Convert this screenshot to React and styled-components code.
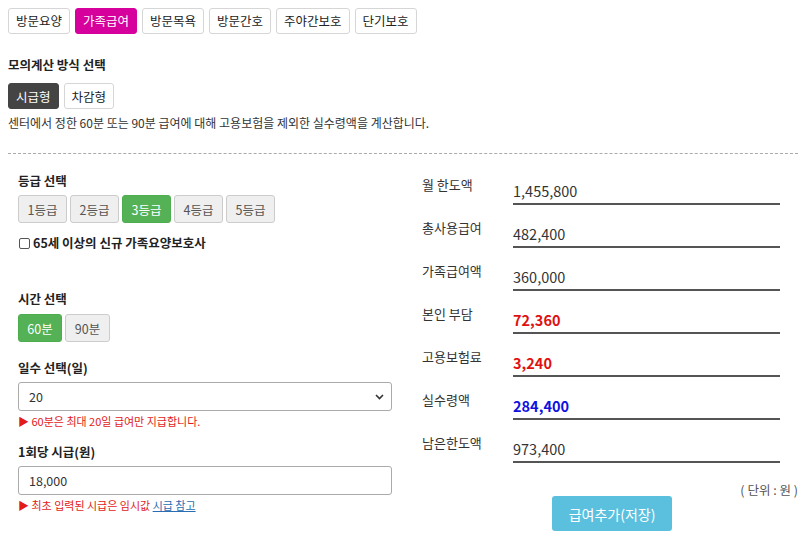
import * as React from 'react';
import styled, { createGlobalStyle } from 'styled-components';

const GlobalStyle = createGlobalStyle`
  body {
    margin: 0;
    background: #fff;
    font-family: "Noto Sans CJK KR", "Noto Sans", sans-serif;
    color: #222;
  }
`;

const Page = styled.div`
  width: 800px;
  height: 539px;
  padding: 8px 0 0 8px;
  box-sizing: border-box;
  overflow: hidden;
`;

const TabRow = styled.div`
  display: flex;
  gap: 5px;
`;

const Tab = styled.button`
  height: 26px;
  padding: 0 7px;
  border: 1px solid ${(p) => (p.$active ? '#d6009c' : '#d6d6d6')};
  border-radius: 3px;
  background: ${(p) => (p.$active ? '#d6009c' : '#fff')};
  color: ${(p) => (p.$active ? '#fff' : '#222')};
  font-family: inherit;
  font-size: 12.5px;
  line-height: 1;
`;

const Title = styled.div`
  font-size: 12.5px;
  font-weight: 700;
  line-height: 18px;
  margin: ${(p) => p.$margin || '0'};
`;

const MethodRow = styled.div`
  display: flex;
  gap: 5px;
  margin-top: 9px;
`;

const MethodBtn = styled.button`
  height: 26px;
  padding: 0 7px;
  border: 1px solid ${(p) => (p.$active ? '#444' : '#d6d6d6')};
  border-radius: 3px;
  background: ${(p) => (p.$active ? '#444' : '#fff')};
  color: ${(p) => (p.$active ? '#fff' : '#222')};
  font-family: inherit;
  font-size: 12.5px;
`;

const Desc = styled.div`
  font-size: 12px;
  line-height: 18px;
  color: #333;
  margin-top: 5px;
`;

const Divider = styled.hr`
  margin: 21px 2px 0 0;
  border: none;
  border-top: 1px dashed #aaa;
`;

const Columns = styled.div`
  display: flex;
  padding-left: 10px;
`;

const Left = styled.div`
  width: 374px;
  padding-top: 18px;
`;

const Right = styled.div`
  width: 368px;
  margin-left: 30px;
  padding-top: 8px;
`;

const BtnGroup = styled.div`
  display: flex;
  gap: 3px;
  margin-top: ${(p) => p.$gap}px;
`;

const GrayBtn = styled.button`
  height: 28px;
  width: ${(p) => p.$w}px;
  padding: 0;
  border: 1px solid ${(p) => (p.$active ? '#4cae4c' : '#ccc')};
  border-radius: 3px;
  background: ${(p) => (p.$active ? '#55b155' : '#efefef')};
  color: ${(p) => (p.$active ? '#fff' : '#555')};
  font-family: inherit;
  font-size: 12.5px;
`;

const Check = styled.label`
  display: flex;
  align-items: center;
  gap: 3px;
  margin-top: 11px;
  font-size: 12.5px;
  font-weight: 700;
  line-height: 18px;
`;

const Box = styled.span`
  width: 9px;
  height: 9px;
  margin-left: 1px;
  border: 1px solid #555;
  border-radius: 2px;
`;

const Field = styled.div`
  margin-top: 5px;
  height: 27px;
  border: 1px solid #aaa;
  border-radius: 3px;
  display: flex;
  align-items: center;
  justify-content: space-between;
  padding: 0 7px 0 10px;
  font-size: 12.5px;
  color: #333;
`;

const Note = styled.div`
  margin-top: 3px;
  font-size: 11px;
  line-height: 15px;
  color: #e21a1a;
`;

const Link = styled.a`
  color: #2a6db0;
  text-decoration: underline;
`;

const ResultRow = styled.div`
  display: flex;
  height: 43px;
  align-items: stretch;
`;

const RLabel = styled.div`
  width: 91px;
  font-size: 13px;
  color: #333;
  line-height: 18px;
  margin-top: 14px;
`;

const RValue = styled.div`
  flex: none;
  width: 267px;
  border-bottom: 2px solid #555;
  display: flex;
  align-items: flex-end;
  padding-bottom: 2px;
  box-sizing: border-box;
  font-size: 14.5px;
  line-height: 20px;
  font-weight: ${(p) => (p.$color ? 700 : 400)};
  color: ${(p) => p.$color || '#333'};
`;

const Unit = styled.div`
  text-align: right;
  font-size: 12.5px;
  color: #555;
  margin-top: 21px;
  margin-right: -8px;
  line-height: 12px;
  white-space: pre;
`;

const SaveBtn = styled.button`
  display: block;
  margin: 0 0 0 130px;
  width: 120px;
  height: 35px;
  border: none;
  border-radius: 3px;
  background: #5bc0de;
  color: #fff;
  font-family: inherit;
  font-size: 14px;
`;

const Chevron = () => (
  <svg width="9" height="6" viewBox="0 0 9 6">
    <path d="M1 1l3.5 3.5L8 1" fill="none" stroke="#333" strokeWidth="1.6" />
  </svg>
);

const tabs = ['방문요양', '가족급여', '방문목욕', '방문간호', '주야간보호', '단기보호'];
const grades = ['1등급', '2등급', '3등급', '4등급', '5등급'];
const results = [
  ['월 한도액', '1,455,800'],
  ['총사용급여', '482,400'],
  ['가족급여액', '360,000'],
  ['본인 부담', '72,360', '#e01010'],
  ['고용보험료', '3,240', '#e01010'],
  ['실수령액', '284,400', '#1010e0'],
  ['남은한도액', '973,400'],
];

export default function App() {
  return (
    <>
      <GlobalStyle />
      <Page>
        <TabRow>
          {tabs.map((t) => (
            <Tab key={t} $active={t === '가족급여'}>{t}</Tab>
          ))}
        </TabRow>
        <Title $margin="22px 0 0">모의계산 방식 선택</Title>
        <MethodRow>
          <MethodBtn $active>시급형</MethodBtn>
          <MethodBtn>차감형</MethodBtn>
        </MethodRow>
        <Desc>센터에서 정한 60분 또는 90분 급여에 대해 고용보험을 제외한 실수령액을 계산합니다.</Desc>
        <Divider />
        <Columns>
          <Left>
            <Title>등급 선택</Title>
            <BtnGroup $gap={5}>
              {grades.map((g) => (
                <GrayBtn key={g} $w={49} $active={g === '3등급'}>{g}</GrayBtn>
              ))}
            </BtnGroup>
            <Check><Box />65세 이상의 신규 가족요양보호사</Check>
            <Title $margin="38px 0 0">시간 선택</Title>
            <BtnGroup $gap={6}>
              <GrayBtn $w={44} $active>60분</GrayBtn>
              <GrayBtn $w={45}>90분</GrayBtn>
            </BtnGroup>
            <Title $margin="17px 0 0">일수 선택(일)</Title>
            <Field>
              <span>20</span>
              <Chevron />
            </Field>
            <Note>▶ 60분은 최대 20일 급여만 지급합니다.</Note>
            <Title $margin="14px 0 0">1회당 시급(원)</Title>
            <Field>
              <span>18,000</span>
            </Field>
            <Note>▶ 최초 입력된 시급은 임시값 <Link>시급 참고</Link></Note>
          </Left>
          <Right>
            {results.map(([l, v, c]) => (
              <ResultRow key={l}>
                <RLabel>{l}</RLabel>
                <RValue $color={c}>{v}</RValue>
              </ResultRow>
            ))}
            <Unit>( 단위 : 원 )</Unit>
            <SaveBtn>급여추가(저장)</SaveBtn>
          </Right>
        </Columns>
      </Page>
    </>
  );
}
